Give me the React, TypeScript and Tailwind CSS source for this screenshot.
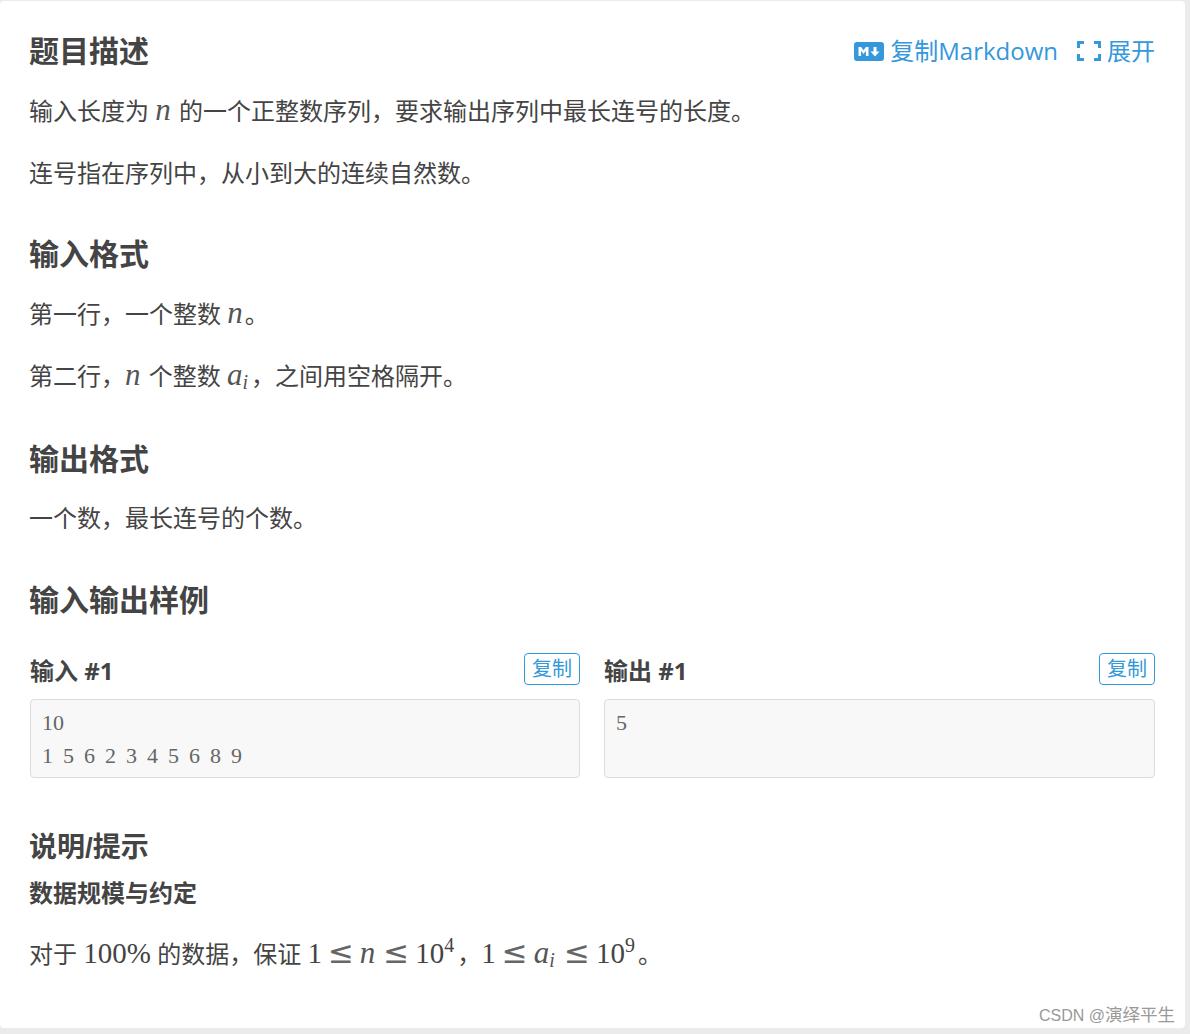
const sans = '[font-family:"Open_Sans","Noto_Sans_CJK_SC",sans-serif]';

function M({ children }: { children: React.ReactNode }) {
  return <span className='[font-family:"Liberation_Serif",serif] text-[29px] leading-none'>{children}</span>;
}

function V({ children }: { children: React.ReactNode }) {
  return <i className='[font-family:"Liberation_Serif",serif] pr-[2px] text-[31px] leading-none text-[#555]'>{children}</i>;
}

function Ai() {
  return (
    <span className="mr-[3px]">
      <i className='[font-family:"Liberation_Serif",serif] text-[31px] leading-none text-[#555]'>a</i>
      <i className='[font-family:"Liberation_Serif",serif] text-[20px] leading-none align-[-4px] text-[#555]'>i</i>
    </span>
  );
}

function Sup({ children }: { children: React.ReactNode }) {
  return <span className='[font-family:"Liberation_Serif",serif] mr-[3px] text-[20px] leading-none align-[11px]'>{children}</span>;
}

function Le() {
  return <span className='[font-family:"DejaVu_Sans",sans-serif] text-[31px] leading-none mx-[6px] text-[#666]'>≤</span>;
}

function Heading({ children, className }: { children: React.ReactNode; className: string }) {
  return <h2 className={"-ml-[1px] text-[30px] leading-[40px] font-bold " + className}>{children}</h2>;
}

function Para({ children, className }: { children: React.ReactNode; className: string }) {
  return <p className={"-ml-[1px] text-[24px] leading-[38px] " + className}>{children}</p>;
}

function Sample({ title, lines, width }: { title: string; lines: string[]; width: string }) {
  return (
    <div className={width}>
      <div className="flex items-end justify-between h-[32px]">
        <h3 className="text-[24px] leading-[32px] font-bold translate-y-[2px]">{title}</h3>
        <button className="h-[32px] w-[56px] border border-[#3498db] rounded-[4px] text-[20px] leading-[28px] text-[#3498db]">复制</button>
      </div>
      <pre className='mt-[14px] h-[79px] bg-[#f8f8f8] border border-[#dcdcdc] rounded-[4px] px-[11px] pt-[6px] [font-family:"Liberation_Serif",serif] text-[22px] leading-[33px] text-[#666] [word-spacing:4.5px]'>
        {lines.join("\n")}
      </pre>
    </div>
  );
}

export default function App() {
  return (
    <div className={"h-[1034px] overflow-hidden pt-[1px] bg-[#ebebeb] text-[#444] " + sans}>
      <div className="relative mr-[5px] h-[1027px] bg-white rounded-[4px] px-[30px]">
        <div className="flex items-center justify-between pt-[30px] h-[70px]">
          <h2 className="-ml-[1px] text-[30px] leading-[40px] font-bold">题目描述</h2>
          <div className="flex items-center text-[24px] text-[#3498db]">
            <svg width="30" height="19" viewBox="0 0 30 19" className="mr-[6px]">
              <rect width="30" height="19" rx="3" fill="#3498db" />
              <path d="M4.5 14V5h2.6l2.4 3.2L11.900 5h2.600v9h-2.600V8.800L9.500 12 7.100 8.800V14z" fill="#fff" />
              <path d="M19.500 5h3v4.500H25.500l-4.500 5-4.500-5h3z" fill="#fff" />
            </svg>
            <span>复制Markdown</span>
            <svg width="24" height="20" viewBox="0 0 24 20" className="ml-[19px] mr-[6px]">
              <path d="M1.500 7V1.500H7M17 1.500h5.500V7M22.500 13v5.500H17M7 18.500H1.500V13" fill="none" stroke="#3498db" strokeWidth="3" />
            </svg>
            <span>展开</span>
          </div>
        </div>

        <Para className="mt-[21px]">输入长度为 <V>n</V> 的一个正整数序列，要求输出序列中最长连号的长度。</Para>
        <Para className="mt-[24px]">连号指在序列中，从小到大的连续自然数。</Para>

        <Heading className="mt-[42px]">输入格式</Heading>
        <Para className="mt-[21px]">第一行，一个整数 <V>n</V>。</Para>
        <Para className="mt-[24px]">第二行，<V>n</V> 个整数 <Ai />，之间用空格隔开。</Para>

        <Heading className="mt-[44px]">输出格式</Heading>
        <Para className="mt-[20px]">一个数，最长连号的个数。</Para>

        <Heading className="mt-[43px]">输入输出样例</Heading>

        <div className="flex justify-between mt-[33px]">
          <Sample title="输入 #1" lines={["10", "1 5 6 2 3 4 5 6 8 9"]} width="w-[550px]" />
          <Sample title="输出 #1" lines={["5"]} width="w-[551px]" />
        </div>

        <h3 className='-ml-[1px] mt-[48px] [font-family:"Liberation_Sans","Noto_Sans_CJK_SC",sans-serif] text-[28px] leading-[44px] font-bold'>说明/提示</h3>
        <h4 className="-ml-[1px] mt-[7px] text-[24px] leading-[32px] font-bold">数据规模与约定</h4>
        <Para className="mt-[26px]">
          对于 <M>100%</M> 的数据，保证 <M>1</M><Le /><V>n</V><Le /><M>10</M><Sup>4</Sup>，<M>1</M><Le /><Ai /><Le /><M>10</M><Sup>9</Sup>。
        </Para>

        <span className='absolute right-[10px] bottom-0 [font-family:"Liberation_Sans","Noto_Sans_CJK_SC",sans-serif] text-[17.5px] leading-[24px] text-[#999]'>
          <span className="text-[16px]">CSDN @</span>演绎平生
        </span>
      </div>
    </div>
  );
}
